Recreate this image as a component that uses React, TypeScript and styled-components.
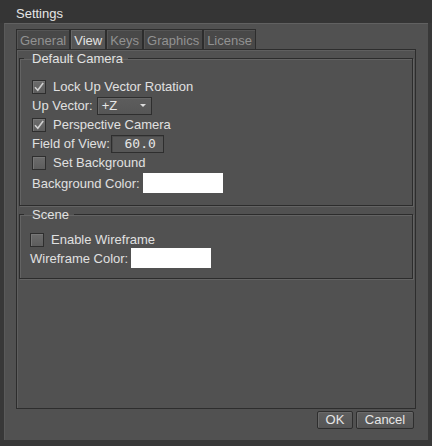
import React from "react";
import styled, { createGlobalStyle } from "styled-components";

const Global = createGlobalStyle`
  html, body { margin: 0; padding: 0; background: #363636; }
  body { font-family: "Liberation Sans", Arial, sans-serif; font-size: 13px; }
  * { box-sizing: border-box; }
`;

const Window = styled.div`
  width: 432px;
  height: 446px;
  background: #383838;
  display: flex;
  flex-direction: column;
`;

const TitleBar = styled.div`
  height: 23px;
  padding: 6px 0 0 16px;
  line-height: 15px;
  color: #e6e6e6;
  background: #353535;
`;

const Frame = styled.div`
  flex: 1;
  margin: 0 4px 6px 4px;
  background: #515151;
  border-top: 1px solid #616161;
  border-left: 1px solid #5a5a5a;
  padding: 5px 12px 11px 11px;
  display: flex;
  flex-direction: column;
`;

const TabBar = styled.div`
  display: flex;
  height: 20px;
`;

const Tab = styled.div<{ $active?: boolean }>`
  height: 20px;
  padding: 3px 3px 0 3px;
  line-height: 16px;
  border: 1px solid #2d2d2d;
  border-bottom: none;
  box-shadow: inset 1px 1px 0 ${(p) => (p.$active ? "#656565" : "#555555")};
  background: ${(p) => (p.$active ? "#555555" : "#484848")};
  color: ${(p) => (p.$active ? "#e2e2e2" : "#929292")};
  white-space: nowrap;
`;

const Pane = styled.div`
  flex: 1;
  border: 1px solid #2d2d2d;
  box-shadow: inset 1px 1px 0 #5f5f5f;
  padding: 1px 2px 0 2px;
  display: flex;
  flex-direction: column;
  gap: 1px;
`;

const GroupBox = styled.fieldset`
  margin: 0;
  padding: 0;
  min-width: 0;
  border: 1px solid #2c2c2c;
  box-shadow: 1px 1px 0 #636363, inset 1px 1px 0 #636363;
`;

const GroupTitle = styled.legend`
  margin-left: 4px;
  padding: 0 5px 0 8px;
  line-height: 15px;
  color: #e2e2e2;
`;

const GroupBody = styled.div<{ $top: number; $left: number; $bottom: number }>`
  padding: ${(p) => `${p.$top}px 0 ${p.$bottom}px ${p.$left}px`};
  display: flex;
  flex-direction: column;
`;

const Row = styled.div<{ $h: number; $gap?: number }>`
  height: ${(p) => p.$h}px;
  display: flex;
  align-items: center;
  gap: ${(p) => p.$gap ?? 7}px;
  color: #e0e0e0;
  white-space: nowrap;
`;

const Box = styled.span`
  width: 14px;
  height: 14px;
  flex: none;
  border: 1px solid #2e2e2e;
  background: linear-gradient(#6c6c6c, #5d5d5d);
  box-shadow: inset 1px 1px 0 #777;
  display: flex;
  align-items: center;
  justify-content: center;
`;

const Combo = styled.div`
  width: 55px;
  height: 18px;
  border: 1px solid #2e2e2e;
  background: linear-gradient(#5d5d5d, #565656);
  box-shadow: inset 1px 1px 0 #666;
  display: flex;
  align-items: center;
  justify-content: space-between;
  padding: 0 5px 0 4px;
  color: #e6e6e6;
`;

const Arrow = styled.span`
  width: 0;
  height: 0;
  border-left: 3px solid transparent;
  border-right: 3px solid transparent;
  border-top: 3px solid #dcdcdc;
`;

const Spin = styled.div`
  width: 53px;
  height: 18px;
  border: 1px solid #2e2e2e;
  background: #575757;
  box-shadow: inset 1px 1px 0 #4a4a4a;
  display: flex;
  align-items: center;
  justify-content: flex-end;
  padding-right: 7px;
  font-family: "DejaVu Sans Mono", "Liberation Mono", monospace;
  font-size: 13px;
  color: #e6e6e6;
`;

const Swatch = styled.span`
  width: 80px;
  height: 20px;
  background: #ffffff;
  flex: none;
`;

const ButtonRow = styled.div`
  display: flex;
  justify-content: flex-end;
  gap: 3px;
  margin: 2px 2px 0 0;
`;

const Button = styled.button<{ $w: number }>`
  width: ${(p) => p.$w}px;
  height: 18px;
  padding: 0;
  border: 1px solid #2e2e2e;
  border-radius: 2px;
  background: linear-gradient(#5f5f5f, #555555);
  box-shadow: inset 1px 1px 0 #6a6a6a;
  color: #e6e6e6;
  font-family: "Liberation Sans", Arial, sans-serif;
  font-size: 13px;
  line-height: 16px;
`;

const Check = () => (
  <svg width="12" height="12" viewBox="0 0 12 12">
    <path d="M2 6.2 L4.8 9.2 L10.2 2" fill="none" stroke="#d0d0d0" strokeWidth="1.6" />
  </svg>
);

const CheckBox = ({ checked, label }: { checked?: boolean; label: string }) => (
  <>
    <Box>{checked && <Check />}</Box>
    <span>{label}</span>
  </>
);

export default function App() {
  return (
    <>
      <Global />
      <Window>
        <TitleBar>Settings</TitleBar>
        <Frame>
          <TabBar>
            <Tab>General</Tab>
            <Tab $active>View</Tab>
            <Tab>Keys</Tab>
            <Tab>Graphics</Tab>
            <Tab>License</Tab>
          </TabBar>
          <Pane>
            <GroupBox>
              <GroupTitle>Default Camera</GroupTitle>
              <GroupBody $top={11} $left={12} $bottom={11}>
                <Row $h={19}>
                  <CheckBox checked label="Lock Up Vector Rotation" />
                </Row>
                <Row $h={19} $gap={4}>
                  <span>Up Vector:</span>
                  <Combo>
                    <span>+Z</span>
                    <Arrow />
                  </Combo>
                </Row>
                <Row $h={19}>
                  <CheckBox checked label="Perspective Camera" />
                </Row>
                <Row $h={19} $gap={1}>
                  <span>Field of View:</span>
                  <Spin>60.0</Spin>
                </Row>
                <Row $h={19}>
                  <CheckBox label="Set Background" />
                </Row>
                <Row $h={22} $gap={3}>
                  <span>Background Color:</span>
                  <Swatch />
                </Row>
              </GroupBody>
            </GroupBox>
            <GroupBox>
              <GroupTitle>Scene</GroupTitle>
              <GroupBody $top={9} $left={10} $bottom={10}>
                <Row $h={17}>
                  <CheckBox label="Enable Wireframe" />
                </Row>
                <Row $h={20} $gap={3}>
                  <span>Wireframe Color:</span>
                  <Swatch />
                </Row>
              </GroupBody>
            </GroupBox>
          </Pane>
          <ButtonRow>
            <Button $w={36}>OK</Button>
            <Button $w={58}>Cancel</Button>
          </ButtonRow>
        </Frame>
      </Window>
    </>
  );
}
